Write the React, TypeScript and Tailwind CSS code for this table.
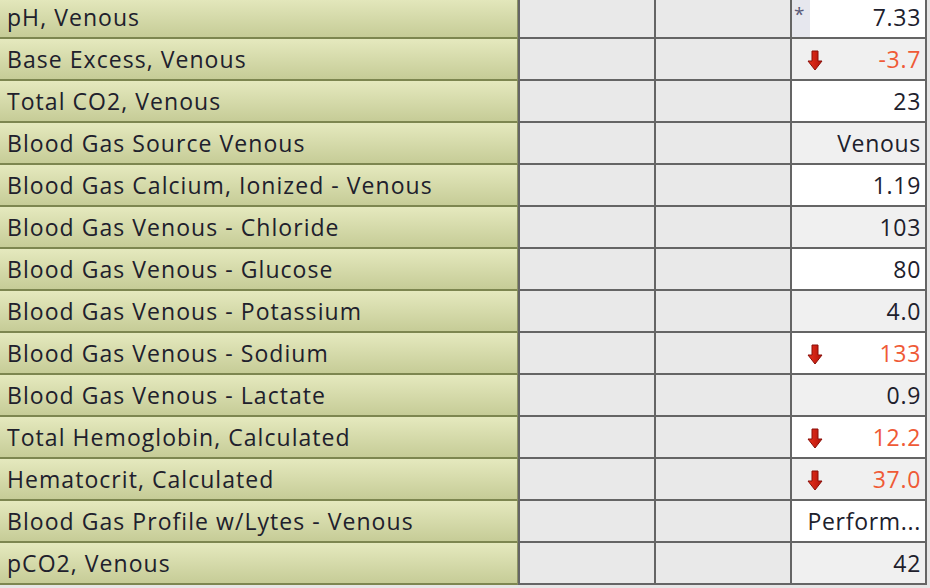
import React from 'react';

type Row = { label: string; value: string; low?: boolean; star?: boolean };

const rows: Row[] = [
  { label: 'pH, Venous', value: '7.33', star: true },
  { label: 'Base Excess, Venous', value: '-3.7', low: true },
  { label: 'Total CO2, Venous', value: '23' },
  { label: 'Blood Gas Source Venous', value: 'Venous' },
  { label: 'Blood Gas Calcium, Ionized - Venous', value: '1.19' },
  { label: 'Blood Gas Venous - Chloride', value: '103' },
  { label: 'Blood Gas Venous - Glucose', value: '80' },
  { label: 'Blood Gas Venous - Potassium', value: '4.0' },
  { label: 'Blood Gas Venous - Sodium', value: '133', low: true },
  { label: 'Blood Gas Venous - Lactate', value: '0.9' },
  { label: 'Total Hemoglobin, Calculated', value: '12.2', low: true },
  { label: 'Hematocrit, Calculated', value: '37.0', low: true },
  { label: 'Blood Gas Profile w/Lytes - Venous', value: 'Perform...' },
  { label: 'pCO2, Venous', value: '42' },
];

const DownArrow = () => (
  <svg width="16" height="21" viewBox="0 0 16 21" className="shrink-0">
    <defs>
      <linearGradient id="ar" x1="0" y1="0" x2="1" y2="0">
        <stop offset="0" stopColor="#e8321e" />
        <stop offset="1" stopColor="#b3120a" />
      </linearGradient>
    </defs>
    <path d="M5 1 H11 V11 H15 L8 20 L1 11 H5 Z" fill="url(#ar)" stroke="#8a0e08" strokeWidth="1" strokeLinejoin="round" />
  </svg>
);

export default function App() {
  return (
    <div className="w-[930px] h-[588px] overflow-hidden bg-[#e6e6e6]" style={{ fontFamily: '"Open Sans", "Noto Sans", sans-serif' }}>
      <div className="-mt-[3px]">
        {rows.map((r, i) => (
          <div key={i} className="flex h-[42px]">
            <div className="w-[518px] border-b-2 border-r border-b-[#7d8650] border-r-[#8e9466] bg-gradient-to-b from-[#e5e9be] to-[#c6cc97] flex items-center pl-[7px] pt-[1px] text-[23px] tracking-[1.05px] text-[#20202c] whitespace-nowrap">
              {r.label}
            </div>
            <div className="w-[136px] border-b-2 border-l-2 border-[#656565] bg-[#e9e9e9]" />
            <div className="w-[136px] border-b-2 border-l-2 border-[#656565] bg-[#e9e9e9]" />
            <div className={`w-[137px] border-b-2 border-l-2 border-r-2 border-[#656565] flex items-center ${i % 2 === 0 ? 'bg-white' : 'bg-[#f0f0f0]'}`}>
              {r.star ? (
                <div className="w-[18px] h-full bg-[#e6e7ee] text-[19px] leading-none text-[#5a5a78] pl-[2px] pt-[8px]">*</div>
              ) : null}
              {r.low ? (
                <div className="pl-[15px] pt-[2px]">
                  <DownArrow />
                </div>
              ) : null}
              <div className={`flex-1 text-right pr-[4px] pt-[1px] text-[23px] tracking-[0.7px] whitespace-nowrap ${r.low ? 'text-[#ef5a36]' : 'text-[#20202c]'}`}>
                {r.value}
              </div>
            </div>
          </div>
        ))}
      </div>
    </div>
  );
}
